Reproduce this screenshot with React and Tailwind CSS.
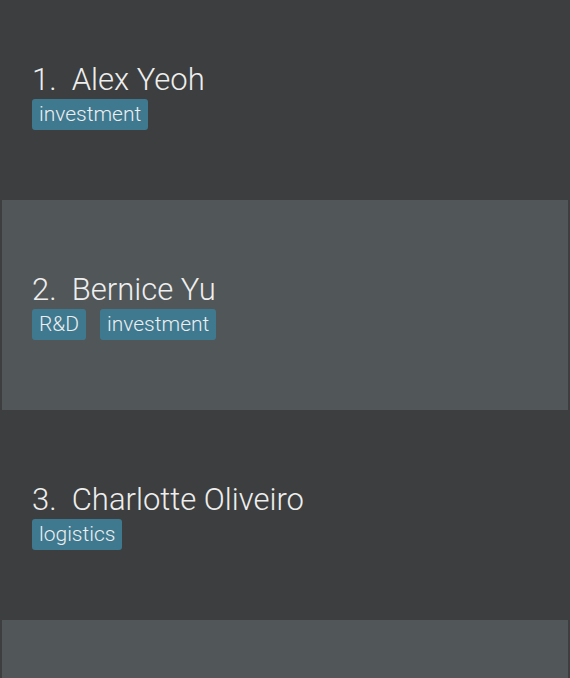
import React from "react";

const people = [
  { n: 1, name: "Alex Yeoh", tags: ["investment"] },
  { n: 2, name: "Bernice Yu", tags: ["R&D", "investment"] },
  { n: 3, name: "Charlotte Oliveiro", tags: ["logistics"] },
];

export default function App() {
  return (
    <div
      className="w-[570px] h-[678px] overflow-hidden bg-[#3c3e3f] px-[2px]"
      style={{ fontFamily: "Roboto, 'Noto Sans', sans-serif" }}
    >
      <div className="-mt-[10px] flex flex-col">
        {people.map((p, i) => (
          <div
            key={p.n}
            className={`h-[210px] shrink-0 flex flex-col justify-center pl-[30px] pt-[2px] ${
              i % 2 === 0 ? "bg-[#3c3e3f]" : "bg-[#515658]"
            }`}
          >
            <div className="text-[31px] font-light leading-[36px] text-[#eeeeee] whitespace-pre">
              {p.n}.{"  "}
              {p.name}
            </div>
            <div className="mt-[1px] flex gap-[14px]">
              {p.tags.map((t) => (
                <span
                  key={t}
                  className="h-[31px] px-[7px] flex items-center rounded-[3px] bg-[#3e7990] text-[21px] font-light text-[#eeeeee]"
                >
                  {t}
                </span>
              ))}
            </div>
          </div>
        ))}
        <div className="h-[210px] shrink-0 bg-[#515658]" />
      </div>
    </div>
  );
}
